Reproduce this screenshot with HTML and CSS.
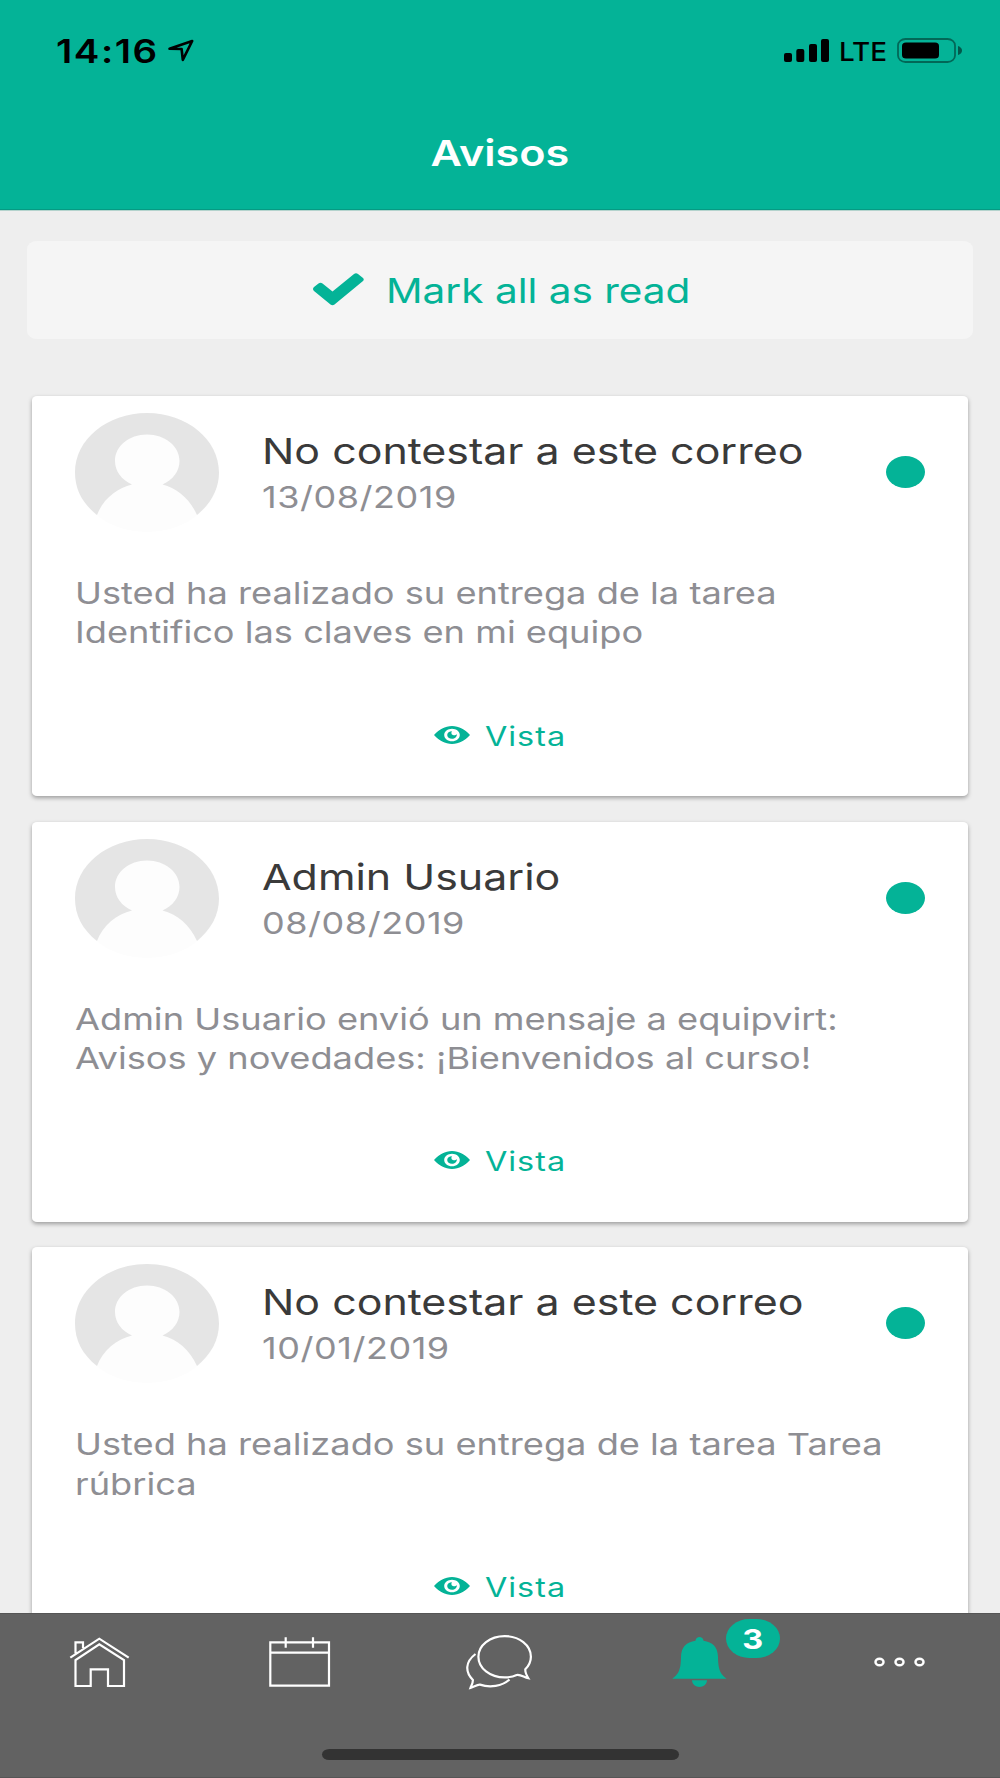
FILE: index.html
```html
<!DOCTYPE html>
<html lang="es">
<head>
<meta charset="utf-8">
<title>Avisos</title>
<link rel="stylesheet" href="styles.css">
</head>
<body>
<svg class="defs" width="0" height="0" aria-hidden="true">
  <symbol id="avatar" viewBox="0 0 144 119">
    <ellipse cx="72" cy="59.5" rx="72" ry="59.5" fill="#fdfdfd"/>
    <path fill="#e5e5e5" d="M22 102C7 90 0 76 0 59.500C0 26.600 32 0 72 0s72 26.600 72 59.500c0 16.500-8 31-22 42.500C115 86 102 75 87.500 71.500C98 67 104.500 58 104.500 48c0-15-14.500-26.500-32.500-26.500S40 33 40 48c0 10 6.500 19 17 23.500C42 75 28 86 22 102z"/>
  </symbol>
  <symbol id="eye" viewBox="0 0 36 18">
    <path fill="currentColor" fill-rule="evenodd" d="M0 9C5 3.500 11 0 18 0s13 3.500 18 9c-5 5.500-11 9-18 9S5 14.500 0 9zM18 2.700c-4.300 0-7.800 2.800-7.800 6.300s3.500 6.300 7.800 6.300s7.800-2.800 7.800-6.300s-3.500-6.300-7.800-6.300z"/>
    <path fill="currentColor" d="M18 5.200c-1 .9-.9 3.300 1 3.900c1.600.5 3-.2 3.800-.8c.3 2.500-1.900 4.500-4.800 4.500c-2.700 0-4.800-1.700-4.800-3.800S15.300 5.200 18 5.200z"/>
  </symbol>
</svg>

<header class="header">
  <div class="status">
    <span class="time wide">14:16</span>
    <svg class="location" width="28" height="24" viewBox="0 0 28 24"><path d="M2.500 10.700L25.200 3L15.800 21.800L14.600 11z" fill="none" stroke="#000" stroke-width="2.600" stroke-linejoin="round"/></svg>
    <svg class="signal" width="46" height="24" viewBox="0 0 46 24">
      <rect x="0" y="15" width="8" height="9" rx="2"/><rect x="12.300" y="11" width="8" height="13" rx="2"/><rect x="25" y="6" width="8" height="18" rx="2"/><rect x="37" y="1" width="8" height="23" rx="2"/>
    </svg>
    <span class="network wide">LTE</span>
    <svg class="battery" width="66" height="26" viewBox="0 0 66 26">
      <rect x="1" y="1" width="57" height="23" rx="7.500" ry="6.500" fill="none" stroke="#000" stroke-opacity=".42" stroke-width="1.800"/>
      <rect x="5" y="4.500" width="37" height="16" rx="4" ry="3.500"/>
      <path d="M61 8Q65 9.500 65 12.500T61 17z" fill-opacity=".5"/>
    </svg>
  </div>
  <h1 class="title"><span class="wide">Avisos</span></h1>
</header>

<main class="content">
  <button class="mark-all">
    <svg class="check" width="51" height="33" viewBox="0 0 51 33"><path d="M1 14L5.500 10.500Q7.500 9 9.500 10.500L19.500 18.500L41 1Q43 -.5 45 1L50 5Q51.500 6.500 50 8L21.500 31.500Q19.500 33 17.500 31.500L1 18Q-1 16 1 14z"/></svg>
    <span class="wide">Mark all as read</span>
  </button>

  <article class="card">
    <div class="card-head">
      <svg class="avatar" width="144" height="119"><use href="#avatar"/></svg>
      <div class="sender"><h2 class="name wide">No contestar a este correo</h2><time class="date wide">13/08/2019</time></div>
      <span class="unread"></span>
    </div>
    <p class="message wide">Usted ha realizado su entrega de la tarea<br>Identifico las claves en mi equipo</p>
    <a class="view"><svg width="36" height="18"><use href="#eye"/></svg><span class="wide">Vista</span></a>
  </article>

  <article class="card">
    <div class="card-head">
      <svg class="avatar" width="144" height="119"><use href="#avatar"/></svg>
      <div class="sender"><h2 class="name wide">Admin Usuario</h2><time class="date wide">08/08/2019</time></div>
      <span class="unread"></span>
    </div>
    <p class="message wide">Admin Usuario envió un mensaje a equipvirt:<br>Avisos y novedades: ¡Bienvenidos al curso!</p>
    <a class="view"><svg width="36" height="18"><use href="#eye"/></svg><span class="wide">Vista</span></a>
  </article>

  <article class="card">
    <div class="card-head">
      <svg class="avatar" width="144" height="119"><use href="#avatar"/></svg>
      <div class="sender"><h2 class="name wide">No contestar a este correo</h2><time class="date wide">10/01/2019</time></div>
      <span class="unread"></span>
    </div>
    <p class="message wide">Usted ha realizado su entrega de la tarea Tarea<br>rúbrica</p>
    <a class="view"><svg width="36" height="18"><use href="#eye"/></svg><span class="wide">Vista</span></a>
  </article>
</main>

<footer class="footer">
  <nav class="tabs">
    <a class="tab"><svg width="80" height="60" viewBox="0 0 80 60"><path d="M10.300 25.700L39.300 6.700L68.700 25.700M15.500 21.300V10.300H23V16M15.500 54V28L39.300 12.300L64 28V54H48V37.300H30.700V54z"/></svg></a>
    <a class="tab"><svg width="80" height="60" viewBox="0 0 80 60"><path d="M10.300 10.300H69V53.700H10.300zM10.300 20.700H69M25.700 5.300V15.700M53 5.300V15.700"/></svg></a>
    <a class="tab"><svg width="80" height="60" viewBox="0 0 80 60"><path d="M56.700 43C53 44.800 49 45.400 44.700 45.400C30 45.400 18.400 36.200 18.400 24.700S30 4.100 44.700 4.100S70.900 13.100 70.900 24.700C70.900 29.500 69 33.500 65.300 37.300C65 40.500 66.700 43.500 68.300 46.200C64 45.300 60.500 42.200 56.700 43zM15.500 22C5 30 5 40 12.900 48C13 51 11.400 53.500 10.500 55.900C14 55 17 52.300 20 52.600C30 56 42 54.200 49.500 47.500"/></svg></a>
    <a class="tab tab-active"><svg width="80" height="60" viewBox="0 0 80 60"><path d="M12.300 46.700C17.500 42.500 20.800 40 21 25C21.200 15 26.500 10 35.500 8.800C35.800 3.800 43.200 3.800 43.500 8.800C52.500 10 57.800 15 58 25C58.200 40 61.500 42.500 66.700 46.700zM32 48.300H47C46.500 57.200 32.500 57.200 32 48.300z"/></svg><span class="badge"><span class="wide">3</span></span></a>
    <a class="tab"><svg width="80" height="60" viewBox="0 0 80 60"><g stroke-width="2.500"><ellipse cx="19.500" cy="30" rx="4" ry="3.300"/><ellipse cx="39.500" cy="30" rx="4" ry="3.300"/><ellipse cx="59.500" cy="30" rx="4" ry="3.300"/></g></svg></a>
  </nav>
  <div class="home-indicator"></div>
</footer>
</body>
</html>
```

FILE: styles.css
```css
* { box-sizing: border-box; }

body {
  margin: 0;
  width: 1000px;
  height: 1778px;
  display: flex;
  flex-direction: column;
  overflow: hidden;
  background: #eee;
  font-family: Inter, "Liberation Sans", sans-serif;
}

.defs { position: absolute; }

/* Horizontally extended lettering used throughout the app. */
.wide {
  display: block;
  white-space: nowrap;
  transform: scaleX(1.2);
  transform-origin: left center;
}

.header {
  flex: none;
  height: 211px;
  background: #04b397;
  border-bottom: 1px solid #b4d3cd;
  box-shadow: inset 0 -1px #069a83;
}

.status {
  display: flex;
  height: 102px;
  padding: 38px 37px 0 56px;
}

.time { width: 111px; font-size: 32px; font-weight: 600; line-height: 27px; letter-spacing: 1.3px; }
.signal { margin-left: auto; }
.network { width: 58px; margin-left: 9px; font-size: 26px; font-weight: 500; line-height: 28px; transform: scaleX(1.07); }

.title {
  display: flex;
  justify-content: center;
  margin: 0;
  color: #fff;
  font-size: 36px;
  font-weight: 600;
  line-height: 102px;
}
.title .wide { transform-origin: center; }

.content {
  flex: 1;
  min-height: 0;
  overflow: hidden;
  padding: 30px 32px 0;
}

.mark-all {
  display: flex;
  align-items: center;
  gap: 22px;
  width: 946px;
  height: 98px;
  margin: 0 -5px 56.800px;
  padding: 0 0 0 286px;
  border: 0;
  border-radius: 10px / 8px;
  background: #f5f5f5;
  color: #04b397;
  font: 400 34px Inter, "Liberation Sans", sans-serif;
}
.mark-all .wide { padding-top: 1px; transform: scaleX(1.192); }
.check { margin-bottom: 2px; fill: currentColor; }

.card {
  height: 400px;
  margin-bottom: 25.800px;
  padding: 17px 43px 0;
  border-radius: 5px / 4px;
  background: #fff;
  box-shadow: 0 2px 4px rgba(0, 0, 0, .34);
}

.card-head { display: flex; height: 119px; }

.sender { flex: 1; padding: 14px 0 0 43px; }
.name { margin: 0; color: #3a3a3a; font-size: 36px; font-weight: 400; line-height: 48px; transform: scaleX(1.192); }
.date { color: #8e8e93; font-size: 30px; line-height: 44px; letter-spacing: .45px; }

.unread {
  width: 39px;
  height: 32px;
  margin-top: 43px;
  border-radius: 50%;
  background: #04b397;
}

.message {
  margin: 42px 0 0;
  color: #8e8e93;
  font-size: 30px;
  line-height: 39.400px;
  transform: scaleX(1.207);
}

.view {
  display: flex;
  align-items: center;
  gap: 15px;
  margin: 63px 0 0 359px;
  color: #04b397;
  font-size: 27px;
  line-height: 36px;
}
.view .wide { padding-top: 3px; letter-spacing: .8px; }
.view svg { margin-bottom: 1px; }

.footer {
  flex: none;
  height: 165px;
  padding-top: 19px;
  background: #626262;
  box-shadow: inset 0 1px #555, inset 0 -1px #555;
}

.tabs { display: flex; width: 1000px; height: 117px; }
.tab { position: relative; width: 200px; padding-left: 60px; }
.tab svg { fill: none; stroke: #fff; stroke-width: 2.2; }
.tab-active svg { fill: #04b397; stroke: none; }

.badge {
  position: absolute;
  left: 126px;
  top: -13px;
  display: flex;
  justify-content: center;
  width: 54px;
  height: 39px;
  border-radius: 24px / 20px;
  background: #04b397;
  color: #fff;
  font-size: 27px;
  font-weight: 700;
  line-height: 41px;
}
.badge .wide { transform-origin: center; }

.home-indicator {
  width: 357px;
  height: 11px;
  margin-left: 322px;
  border-radius: 8px / 6px;
  background: #333;
}
```
